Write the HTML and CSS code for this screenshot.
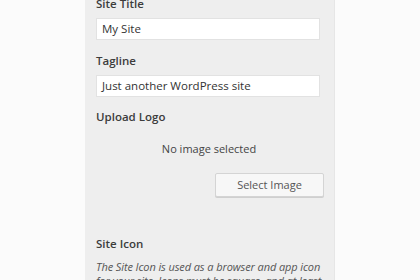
FILE: index.html
```html
<!DOCTYPE html>
<html>
<head>
<meta charset="utf-8">
<link rel="stylesheet" href="styles.css">
</head>
<body>
<div class="page">
  <div class="panel">
    <div class="label first">Site Title</div>
    <div class="input">My Site</div>
    <div class="label">Tagline</div>
    <div class="input">Just another WordPress site</div>
    <div class="label logo-label">Upload Logo</div>
    <div class="placeholder">No image selected</div>
    <div class="actions"><div class="button">Select Image</div></div>
    <div class="label icon-label">Site Icon</div>
    <p class="desc">The Site Icon is used as a browser and app icon for your site. Icons must be square, and at least 512 pixels wide and tall.</p>
  </div>
</div>
</body>
</html>
```
FILE: styles.css
```css
html, body {
  margin: 0;
  padding: 0;
  background: #fbfbfb;
  overflow: hidden;
}
.page {
  width: 420px;
  height: 280px;
  display: flex;
  justify-content: center;
}
.panel {
  width: 250px;
  background: #eeeeee;
  border-right: 1px solid #e6e6e6;
  box-sizing: border-box;
  padding: 0 9px 0 11px;
  font-family: "Open Sans", sans-serif;
  color: #444;
  display: flex;
  flex-direction: column;
}
.label {
  font-size: 11.5px;
  font-weight: 600;
  color: #3c3c3c;
  line-height: 16px;
  margin-top: 13px;
}
.label.first {
  margin-top: -4px;
}
.label.logo-label {
  margin-top: 12px;
}
.input {
  height: 22px;
  margin-top: 6px;
  margin-right: 5px;
  background: #fff;
  border: 1px solid #e2e2e2;
  box-sizing: border-box;
  font-size: 11.5px;
  line-height: 20px;
  padding-left: 5px;
  color: #333;
}
.placeholder {
  text-align: center;
  font-size: 11px;
  line-height: 16px;
  margin-top: 16px;
  margin-right: 3px;
  color: #444;
}
.actions {
  display: flex;
  justify-content: flex-end;
  margin-top: 16px;
}
.button {
  width: 109px;
  height: 24px;
  box-sizing: border-box;
  background: #f7f7f7;
  border: 1px solid #d4d4d4;
  border-radius: 2px;
  box-shadow: 0 1px 0 #cfcfcf;
  font-size: 11px;
  line-height: 22px;
  text-align: center;
  color: #555;
  margin-right: 1px;
}
.icon-label {
  margin-top: 39px;
}
.desc {
  margin: 8px 0 0;
  font-size: 11px;
  letter-spacing: -0.1px;
  font-style: italic;
  line-height: 14px;
  color: #555;
}
```
